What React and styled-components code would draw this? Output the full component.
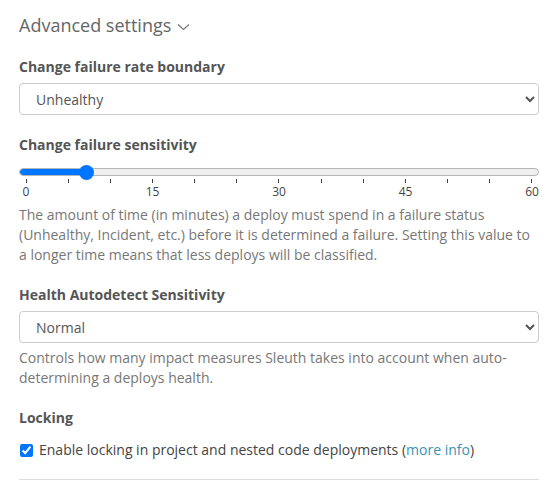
import React from "react";
import styled, { createGlobalStyle } from "styled-components";

const Global = createGlobalStyle`
  html, body { margin: 0; padding: 0; background: #fff; }
  body { font-family: "Open Sans", "Liberation Sans", sans-serif; color: #555; }
  * { box-sizing: border-box; }
`;

const Page = styled.div`
  padding: 14px 21px 0 19px;
  width: 560px;
`;

const Title = styled.h2`
  margin: 0;
  font-size: 18px;
  line-height: 22px;
  font-weight: 400;
  color: #666;
  display: flex;
  align-items: center;
  gap: 6px;
`;

const Field = styled.div`
  margin-top: ${(p) => p.$top || 20}px;
  display: flex;
  flex-direction: column;
`;

const Label = styled.div`
  font-size: 14px;
  line-height: 20px;
  font-weight: 700;
  color: #555;
`;

const Select = styled.select`
  margin-top: 6px;
  height: 32px;
  width: 520px;
  border: 1px solid #ccc;
  border-radius: 4px;
  background: #fff;
  color: #555;
  font-family: inherit;
  font-size: 14px;
  padding: 0 8px 0 12px;
`;

const Help = styled.p`
  margin: ${(p) => p.$top || 0}px 0 0;
  font-size: 14px;
  line-height: 20px;
  color: #777;
`;

const SliderWrap = styled.div`
  margin-top: 10px;
  display: flex;
  flex-direction: column;
`;

const Track = styled.div`
  position: relative;
  height: 14px;
  display: flex;
  align-items: center;
`;

const Rail = styled.div`
  width: 100%;
  height: 8px;
  border-radius: 4px;
  border: 1px solid #b5b5b5;
  background: #efefef;
  overflow: hidden;
  display: flex;
`;

const Fill = styled.div`
  height: 100%;
  background: #0075ff;
  border-radius: 4px 0 0 4px;
`;

const Thumb = styled.div`
  position: absolute;
  top: 0;
  width: 15px;
  height: 15px;
  margin-left: -7px;
  border-radius: 50%;
  background: #0075ff;
`;

const Ticks = styled.div`
  margin-top: 0;
  padding: 0 7px;
  display: flex;
  justify-content: space-between;
  height: 4px;
`;

const Tick = styled.span`
  width: 1px;
  height: 4px;
  background: #444;
`;

const Scale = styled.div`
  margin-top: 2px;
  padding: 0 7px;
  display: flex;
  justify-content: space-between;
  font-size: 12px;
  line-height: 14px;
  color: #444;
`;

const ScaleLabel = styled.span`
  width: 0;
  display: flex;
  justify-content: center;
  white-space: nowrap;
`;

const CheckRow = styled.label`
  margin-top: 12px;
  display: flex;
  align-items: center;
  font-size: 14px;
  line-height: 20px;
  color: #444;
  gap: 6px;
`;

const Check = styled.input`
  margin: 0 0 0 1px;
  width: 13px;
  height: 13px;
  accent-color: #0075ff;
`;

const Link = styled.a`
  color: #3a93b4;
  text-decoration: none;
`;

const Divider = styled.hr`
  margin: 19px 0 0;
  border: 0;
  border-top: 1px solid #ddd;
  width: 520px;
`;

function Chevron() {
  return (
    <svg width="13" height="8" viewBox="0 0 13 8" style={{ marginTop: 4 }}>
      <polyline points="1,1.5 6.5,6.5 12,1.5" fill="none" stroke="#777" strokeWidth="1.2" />
    </svg>
  );
}

function Slider({ value, max }) {
  const inner = 506;
  const pos = 7 + (value / max) * inner;
  const ticks = Array.from({ length: 13 });
  return (
    <SliderWrap>
      <Track>
        <Rail>
          <Fill style={{ width: pos }} />
        </Rail>
        <Thumb style={{ left: pos }} />
      </Track>
      <Ticks>
        {ticks.map((_, i) => (
          <Tick key={i} />
        ))}
      </Ticks>
      <Scale>
        {[0, 15, 30, 45, 60].map((n) => (
          <ScaleLabel key={n}>{n}</ScaleLabel>
        ))}
      </Scale>
    </SliderWrap>
  );
}

export default function App() {
  return (
    <Page>
      <Global />
      <Title>
        Advanced settings <Chevron />
      </Title>

      <Field $top={21}>
        <Label>Change failure rate boundary</Label>
        <Select defaultValue="unhealthy">
          <option value="unhealthy">Unhealthy</option>
          <option value="incident">Incident</option>
        </Select>
      </Field>

      <Field>
        <Label>Change failure sensitivity</Label>
        <Slider value={7.1} max={60} />
        <Help $top={6}>
          The amount of time (in minutes) a deploy must spend in a failure status
          (Unhealthy, Incident, etc.) before it is determined a failure. Setting this
          value to a longer time means that less deploys will be classified.
        </Help>
      </Field>

      <Field $top={20}>
        <Label>Health Autodetect Sensitivity</Label>
        <Select defaultValue="normal">
          <option value="normal">Normal</option>
          <option value="high">High</option>
        </Select>
        <Help $top={5}>
          Controls how many impact measures Sleuth takes into account when
          auto-determining a deploys health.
        </Help>
      </Field>

      <Field>
        <Label>Locking</Label>
        <CheckRow>
          <Check type="checkbox" defaultChecked />
          <span>
            Enable locking in project and nested code deployments (
            <Link href="#">more info</Link>)
          </span>
        </CheckRow>
      </Field>

      <Divider />
    </Page>
  );
}
